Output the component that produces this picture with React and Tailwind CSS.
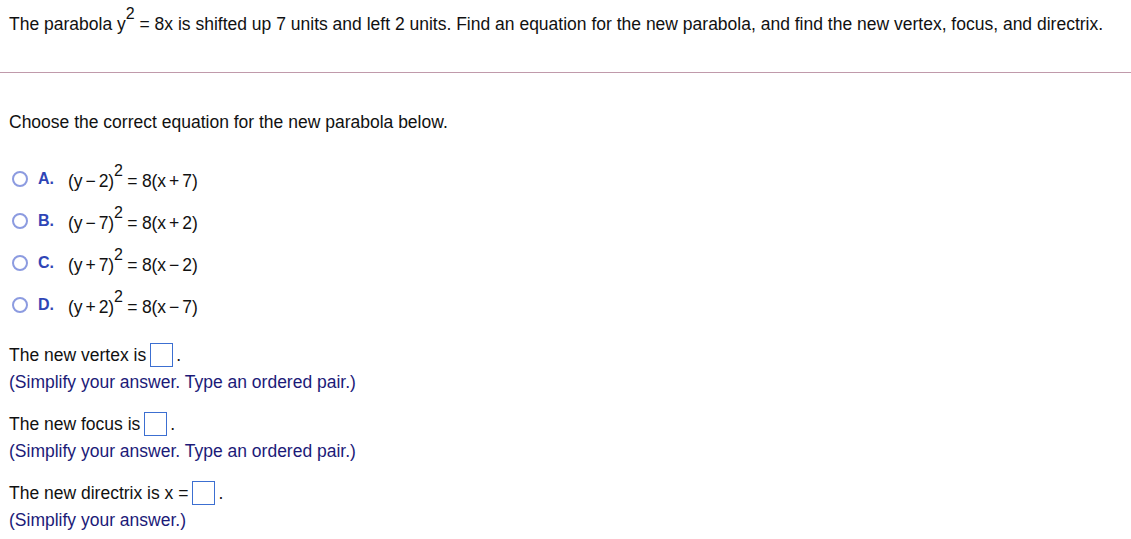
const options = [
  { letter: 'A.', left: '(y\u2009\u2212\u20092)', right: '= 8(x\u2009+\u20097)' },
  { letter: 'B.', left: '(y\u2009\u2212\u20097)', right: '= 8(x\u2009+\u20092)' },
  { letter: 'C.', left: '(y\u2009+\u20097)', right: '= 8(x\u2009\u2212\u20092)' },
  { letter: 'D.', left: '(y\u2009+\u20092)', right: '= 8(x\u2009\u2212\u20097)' },
]

function Sq() {
  return <sup className="relative -top-[4px] text-[16px] leading-none align-super">2</sup>
}

function AnswerBox() {
  return <span className="inline-block w-[23px] h-[24px] border border-[#3c6fd1] align-middle ml-[4px] mr-[3px] bg-white" />
}

function Hint({ children }) {
  return <p className="mt-[5px] leading-[20px] text-[#1c1a78]">{children}</p>
}

export default function App() {
  return (
    <div className="min-h-screen bg-white text-[17.5px] text-[#111] pt-[10px]" style={{ fontFamily: '"Liberation Sans", Arial, sans-serif' }}>
      <p className="px-[9px] leading-[20px]">
        The parabola y<Sq /> = 8x is shifted up 7 units and left 2 units. Find an equation for the new parabola, and find the new vertex, focus, and directrix.
      </p>

      <div className="mt-[38px] h-px bg-[#c09aab]" />

      <div className="px-[9px]">
        <p className="mt-[39px] leading-[20px]">Choose the correct equation for the new parabola below.</p>

        <div className="mt-[26px]">
          {options.map((o) => (
            <div key={o.letter} className="h-[42px] flex items-center">
              <span className="ml-[3px] w-[16px] h-[16px] rounded-full border-2 border-[#8c9be0] bg-white" />
              <span className="ml-[10px] w-[30px] font-bold text-[16px] text-[#2f45b6]">{o.letter}</span>
              <span className="leading-[20px] tracking-[-0.2px]">
                {o.left}<Sq /> {o.right}
              </span>
            </div>
          ))}
        </div>

        <div className="mt-[17px] h-[24px] flex items-center">
          The new vertex is<AnswerBox />.
        </div>
        <Hint>(Simplify your answer. Type an ordered pair.)</Hint>

        <div className="mt-[20px] h-[24px] flex items-center">
          The new focus is<AnswerBox />.
        </div>
        <Hint>(Simplify your answer. Type an ordered pair.)</Hint>

        <div className="mt-[20px] h-[24px] flex items-center">
          The new directrix is x =<AnswerBox />.
        </div>
        <Hint>(Simplify your answer.)</Hint>
      </div>
    </div>
  )
}
